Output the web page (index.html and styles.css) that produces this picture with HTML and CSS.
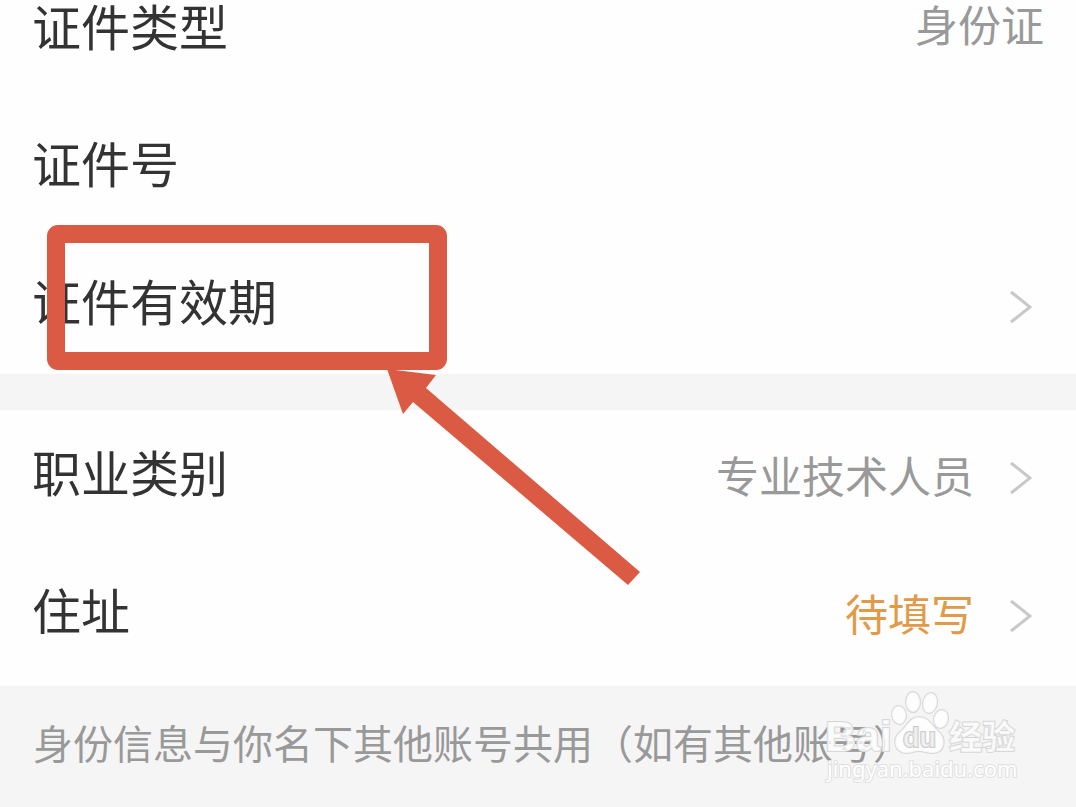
FILE: index.html
```html
<!DOCTYPE html>
<html lang="zh-CN">
<head>
<meta charset="utf-8">
<meta name="viewport" content="width=device-width, initial-scale=1">
<title>身份信息</title>
<link rel="stylesheet" href="styles.css">
</head>
<body>
<main class="page">
  <section class="group">
    <div class="row row-first">
      <span class="label">证件类型</span>
      <span class="value">身份证</span>
    </div>
    <div class="row">
      <span class="label">证件号</span>
    </div>
    <button class="row" type="button">
      <span class="label">证件有效期</span>
      <svg class="chevron" viewBox="0 0 22 36" aria-hidden="true"><path d="M1 3L20 18L1 33"/></svg>
    </button>
  </section>
  <section class="group">
    <button class="row" type="button">
      <span class="label">职业类别</span>
      <span class="value">专业技术人员</span>
      <svg class="chevron" viewBox="0 0 22 36" aria-hidden="true"><path d="M1 3L20 18L1 33"/></svg>
    </button>
    <button class="row" type="button">
      <span class="label">住址</span>
      <span class="value value-pending">待填写</span>
      <svg class="chevron" viewBox="0 0 22 36" aria-hidden="true"><path d="M1 3L20 18L1 33"/></svg>
    </button>
  </section>
  <footer class="note">
    <p class="note-text">身份信息与你名下其他账号共用（如有其他账号）</p>
    <svg class="watermark" viewBox="0 0 200 100" role="img" aria-label="Baidu 经验 jingyan.baidu.com">
      <g class="mark">
        <text class="mark-bai" x="1" y="63">Bai</text>
        <ellipse cx="75" cy="27" rx="7" ry="9" transform="rotate(-8 75 27)"/>
        <ellipse cx="89" cy="14" rx="7" ry="10"/>
        <ellipse cx="106" cy="15" rx="7" ry="10" transform="rotate(12 106 15)"/>
        <ellipse cx="117" cy="31" rx="7" ry="9" transform="rotate(14 117 31)"/>
        <path d="M95 29C105 29 108 38 114 43C123 50 121 65 109 65C103 65 100 63 95 63C90 63 87 65 82 65C70 64 68 51 76 44C83 39 85 29 95 29Z"/>
        <text class="mark-du" x="79" y="59">du</text>
        <text class="mark-name" x="125" y="61">经验</text>
        <text class="mark-url" x="3" y="89">jingyan.baidu.com</text>
      </g>
    </svg>
  </footer>
  <svg class="annotation" viewBox="0 0 600 370" aria-hidden="true">
    <rect x="16" y="14" width="382" height="127" rx="2"/>
    <path d="M347 149L396 155L386 168L600 352L588 365L373 182L363 194Z"/>
  </svg>
</main>
</body>
</html>
```
FILE: styles.css
```css
* {
  box-sizing: border-box;
}

body {
  margin: 0;
  background: #f5f5f5;
  color: #333;
  font-family: "Noto Sans CJK SC", sans-serif;
}

.page {
  position: relative;
  display: flex;
  flex-direction: column;
  min-height: 100vh;
  overflow: hidden;
}

.group {
  background: #fefefe;
}

.group + .group {
  margin-top: 36px;
}

.row {
  display: flex;
  align-items: center;
  width: 100%;
  min-height: 138px;
  padding: 0 32px;
  border: 0;
  background: none;
  color: inherit;
  font: inherit;
  text-align: left;
}

.group + .group .row {
  padding-bottom: 6px;
}

.row-first {
  align-items: flex-start;
  min-height: 98px;
}

.label {
  flex: 1;
  padding-bottom: 10px;
  font-size: 49px;
  line-height: 50px;
}

.value {
  padding-bottom: 4px;
  color: #999;
  font-size: 43px;
  line-height: 46px;
}

.value-pending {
  color: #e09a48;
}

.chevron {
  width: 22px;
  height: 36px;
  margin: 3px 12px 0 36px;
  fill: none;
  stroke: #c8c8c8;
  stroke-width: 3;
}

.note {
  position: relative;
  padding: 26px 33px;
}

.note-text {
  margin: 0;
  color: #999;
  font-size: 40px;
  line-height: 60px;
  white-space: nowrap;
}

.watermark {
  position: absolute;
  top: 2px;
  right: 52px;
  width: 200px;
  height: 100px;
}

.mark {
  fill: #fff;
  fill-opacity: 0.75;
  stroke: #d8d8d8;
  stroke-width: 2;
  paint-order: stroke;
  font-family: "Liberation Sans", "Noto Sans CJK SC", sans-serif;
}

.mark-bai {
  font-size: 43px;
  font-weight: 700;
}

.mark-du {
  fill: #f0f0f0;
  stroke: #ccc;
  font-size: 27px;
  font-weight: 700;
}

.mark-name {
  font-family: "Noto Sans CJK SC", sans-serif;
  font-size: 33px;
  font-weight: 700;
}

.mark-url {
  fill-opacity: 1;
  stroke: #e0e0e0;
  font-family: "Noto Sans", sans-serif;
  font-size: 22px;
}

.annotation {
  position: absolute;
  top: 220px;
  left: 40px;
  width: 600px;
  height: 370px;
  pointer-events: none;
}

.annotation rect {
  fill: none;
  stroke: #db5a43;
  stroke-width: 18;
  stroke-linejoin: round;
}

.annotation path {
  fill: #db5a43;
}
```
